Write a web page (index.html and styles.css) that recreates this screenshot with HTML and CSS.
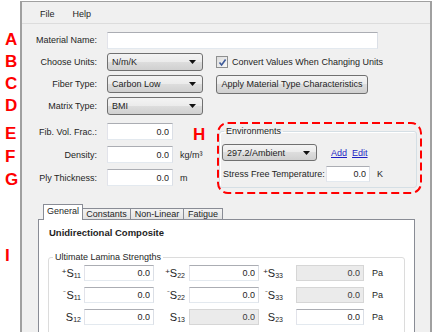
FILE: index.html
```html
<!DOCTYPE html>
<html lang="en">
<head>
    <meta charset="UTF-8">
    <title>Material Editor</title>
    <link rel="stylesheet" href="styles.css">
</head>
<body>

<div class="screen">

    <div class="marks">
        <span class="mark">A</span>
        <span class="mark">B</span>
        <span class="mark">C</span>
        <span class="mark">D</span>
        <span class="mark mark-e">E</span>
        <span class="mark mark-gap">F</span>
        <span class="mark mark-gap">G</span>
        <span class="mark mark-i">I</span>
    </div>

    <div class="window">

        <div class="menubar">
            <span>File</span>
            <span>Help</span>
        </div>

        <div class="form-top">
            <label class="lbl">Material Name:</label>
            <input class="txt txt-name" type="text">

            <label class="lbl">Choose Units:</label>
            <div class="combo"><span>N/m/K</span><svg width="7" height="4"><path d="M0 0h7L3.5 4z"/></svg></div>
            <div class="check">
                <span class="box"><svg width="9" height="9"><path d="M1.5 4.5L3.6 7L7.6 1.5" fill="none" stroke="#3d5a99" stroke-width="1.6"/></svg></span>
                Convert Values When Changing Units
            </div>

            <label class="lbl">Fiber Type:</label>
            <div class="combo"><span>Carbon Low</span><svg width="7" height="4"><path d="M0 0h7L3.5 4z"/></svg></div>
            <button class="btn" type="button">Apply Material Type Characteristics</button>

            <label class="lbl">Matrix Type:</label>
            <div class="combo"><span>BMI</span><svg width="7" height="4"><path d="M0 0h7L3.5 4z"/></svg></div>
        </div>

        <div class="lower">
            <div class="fields">
                <label class="lbl">Fib. Vol. Frac.:</label>
                <input class="txt num" type="text" value="0.0">
                <span class="mark mark-h">H</span>

                <label class="lbl">Density:</label>
                <input class="txt num" type="text" value="0.0">
                <span class="unit">kg/m³</span>

                <label class="lbl">Ply Thickness:</label>
                <input class="txt num" type="text" value="0.0">
                <span class="unit">m</span>
            </div>

            <div class="env">
                <svg class="outline" width="205" height="72" viewBox="0 0 205 72">
                    <rect x="1" y="1" width="203" height="70" rx="10" fill="none" stroke="#ff0000" stroke-width="2" stroke-dasharray="8 4"/>
                </svg>
                <fieldset class="group group-env">
                    <legend>Environments</legend>
                    <div class="env-row">
                        <div class="combo combo-env"><span>297.2/Ambient</span><svg width="7" height="4"><path d="M0 0h7L3.5 4z"/></svg></div>
                        <a class="link link-add" href="#">Add</a>
                        <a class="link" href="#">Edit</a>
                    </div>
                    <div class="env-row env-row-temp">
                        <label class="temp-lbl">Stress Free Temperature:</label>
                        <input class="txt num txt-temp" type="text" value="0.0">
                        <span class="unit">K</span>
                    </div>
                </fieldset>
            </div>
        </div>

        <div class="tabctl">
            <div class="tabstrip">
                <span class="tab tab-on">General</span>
                <span class="tab tab-constants">Constants</span>
                <span class="tab tab-nonlinear">Non-Linear</span>
                <span class="tab tab-fatigue">Fatigue</span>
            </div>
            <div class="panel">
                <div class="panel-title">Unidirectional Composite</div>
                <fieldset class="group group-lamina">
                    <legend>Ultimate Lamina Strengths</legend>
                    <div class="lamina">
                        <span class="sym sym-1"><sup>+</sup>S<sub>11</sub></span>
                        <input class="txt num" type="text" value="0.0">
                        <span class="sym sym-2"><sup>+</sup>S<sub>22</sub></span>
                        <input class="txt num" type="text" value="0.0">
                        <span class="sym sym-3"><sup>+</sup>S<sub>33</sub></span>
                        <input class="txt num off" type="text" value="0.0" disabled>
                        <span class="unit">Pa</span>

                        <span class="sym sym-1"><sup>&#8315;</sup>S<sub>11</sub></span>
                        <input class="txt num" type="text" value="0.0">
                        <span class="sym sym-2"><sup>&#8315;</sup>S<sub>22</sub></span>
                        <input class="txt num" type="text" value="0.0">
                        <span class="sym sym-3"><sup>&#8315;</sup>S<sub>33</sub></span>
                        <input class="txt num off" type="text" value="0.0" disabled>
                        <span class="unit">Pa</span>

                        <span class="sym sym-1">S<sub>12</sub></span>
                        <input class="txt num" type="text" value="0.0">
                        <span class="sym sym-2">S<sub>13</sub></span>
                        <input class="txt num off" type="text" value="0.0" disabled>
                        <span class="sym sym-3">S<sub>23</sub></span>
                        <input class="txt num" type="text" value="0.0">
                        <span class="unit">Pa</span>
                    </div>
                </fieldset>
            </div>
        </div>

    </div>
</div>

</body>
</html>
```

FILE: styles.css
```css
body { margin: 0; width: 434px; height: 332px; overflow: hidden; background: #fff; font-family: "Liberation Sans", Arial, sans-serif; font-size: 9px; color: #1e1e1e; }
.screen { display: flex; height: 332px; overflow: hidden; }

/* red callout letters */
.marks { width: 20px; flex: none; padding-top: 29px; box-sizing: border-box; }
.mark { display: block; height: 22px; line-height: 22px; padding-left: 5px; font-size: 17px; font-weight: bold; color: #ff0000; }
.mark-e { margin-top: 6px; }
.mark-gap { margin-top: 1px; }
.mark-i { margin-top: 54px; }
.mark-h { height: 17px; line-height: 23px; padding-left: 0; margin-left: 20px; }

/* window */
.window { width: 408px; flex: none; border: solid #a0a0a0; border-width: 1px 2px 0 2px; margin-top: 1px; background: #f0f0f0; }
.menubar { display: flex; gap: 18px; height: 18px; line-height: 18px; padding: 3px 0 0 18px; border-bottom: 1px solid #dcdcdc; }

.lbl { text-align: right; padding-right: 10px; white-space: nowrap; }
.txt { box-sizing: border-box; height: 17px; margin: 0; padding: 0 3px; border: 1px solid; border-color: #abadb3 #dbdfe6 #e3e9ef #e2e3ea; background: #fff; font-family: inherit; font-size: 9px; color: #1e1e1e; outline: none; }
.num { text-align: right; }
.off { background: #ebebeb; border-color: #d6d6d6; color: #3a3a3a; }
.unit { padding-left: 7px; white-space: nowrap; }

.form-top { display: grid; grid-template-columns: 85px 96px auto; grid-auto-rows: 18px; row-gap: 4px; align-items: center; padding-top: 7px; }
.txt-name { grid-column: 2 / span 2; width: 271px; }

.combo { box-sizing: border-box; height: 18px; display: flex; align-items: center; justify-content: space-between; padding: 0 6px 0 4px; border: 1px solid #707070; border-radius: 3px; background: linear-gradient(#f4f4f4, #ebebeb 50%, #dddddd 50%, #d0d0d0); }
.combo svg { fill: #111; }
.check { display: flex; align-items: center; gap: 4px; margin-left: 13px; white-space: nowrap; }
.box { box-sizing: border-box; width: 12px; height: 12px; display: flex; align-items: center; justify-content: center; border: 1px solid #8e8f8f; background: linear-gradient(135deg, #dcdcdc, #f8f8f8); }
.btn { justify-self: start; box-sizing: border-box; width: 152px; height: 19px; margin-left: 13px; padding: 0; border: 1px solid #707070; border-radius: 3px; background: linear-gradient(#f4f4f4, #ebebeb 50%, #dddddd 50%, #d0d0d0); font-family: inherit; font-size: 9px; color: #1e1e1e; }

/* fibre fields and environments */
.lower { display: flex; margin-top: 7px; }
.fields { width: 195px; flex: none; display: grid; grid-template-columns: 85px 66px auto; grid-auto-rows: 17px; row-gap: 6px; align-items: center; padding-top: 1px; align-self: start; }

.env { position: relative; width: 205px; height: 72px; flex: none; }
.outline { position: absolute; left: 0; top: 0; }
.group { margin: 0; padding: 0; min-width: 0; border: 1px solid #d5dfe5; border-radius: 3px; }
.group legend { padding: 0 2px; line-height: 12px; }
.group-env { margin: 3px 5px 0 2px; padding: 0 0 5px 2px; box-shadow: inset 1px 1px 0 #fff; }
.group-env legend { margin-left: 2px; }
.env-row { display: flex; align-items: center; margin-top: 7px; }
.env-row-temp { margin-top: 5px; }
.combo-env { width: 95px; height: 17px; }
.link { color: #1f1fc4; text-decoration: underline; }
.link-add { margin: 0 5px 0 14px; }
.temp-lbl { width: 103px; padding-left: 1px; white-space: nowrap; }
.txt-temp { width: 44px; height: 16px; }

/* tabs */
.tabctl { margin: 10px 0 0 16px; width: 377px; }
.tabstrip { display: flex; align-items: flex-end; padding-left: 5px; }
.tab { box-sizing: border-box; height: 11px; line-height: 10px; text-align: center; border: 1px solid #898c95; border-bottom: none; margin-left: -1px; background: linear-gradient(#f3f3f3, #e3e3e3); }
.tab-on { position: relative; z-index: 1; height: 16px; line-height: 13px; width: 40px; margin-left: 0; margin-bottom: -1px; background: #fff; }
.tab-constants { width: 49px; }
.tab-nonlinear { width: 54px; }
.tab-fatigue { width: 40px; }

.panel { height: 105px; overflow: hidden; border: 1px solid #898c95; background: #fff; padding: 7px 9px 0 9px; }
.panel-title { font-size: 9.5px; font-weight: bold; line-height: 12px; padding-left: 1px; }
.group-lamina { margin-top: 12px; height: 90px; border-color: #dcdcdc; }
.group-lamina legend { margin-left: 4px; }

.lamina { display: grid; grid-template-columns: 35px 70px 35px 70px 37px 68px auto; grid-auto-rows: 16px; row-gap: 6px; align-items: center; margin-top: 2px; }
.lamina .txt { height: 16px; }
.lamina .unit { padding-left: 8px; }
.sym { text-align: right; font-size: 11px; line-height: 16px; white-space: nowrap; }
.sym sup { font-size: 8px; line-height: 0; vertical-align: 3px; }
.sym sub { font-size: 7px; line-height: 0; vertical-align: -1px; }
.sym-1 { padding-right: 3px; }
.sym-2 { padding-right: 4px; }
.sym-3 { padding-right: 13px; }
```
